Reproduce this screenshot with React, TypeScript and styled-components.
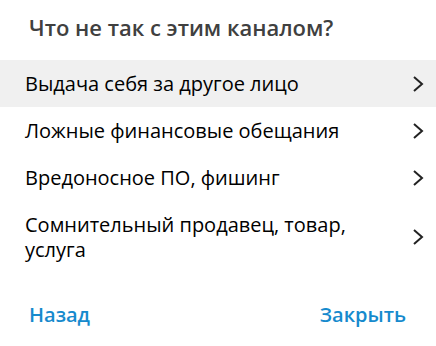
import React from "react";
import styled, { createGlobalStyle } from "styled-components";

const GlobalStyle = createGlobalStyle`
  html, body {
    margin: 0;
    padding: 0;
    background: #ffffff;
  }
  body {
    font-family: "Open Sans", "Noto Sans", sans-serif;
  }
`;

const Box = styled.div`
  width: 436px;
  height: 346px;
  background: #ffffff;
  display: flex;
  flex-direction: column;
`;

const Title = styled.h2`
  margin: 0;
  padding: 12px 29px 0;
  height: 60px;
  box-sizing: border-box;
  font-size: 22px;
  font-weight: 600;
  line-height: 30px;
  color: #404040;
`;

const List = styled.div`
  display: flex;
  flex-direction: column;
`;

const Row = styled.div<{ $active?: boolean }>`
  display: flex;
  align-items: center;
  justify-content: space-between;
  padding: 11px 11px 11px 25px;
  background: ${(p) => (p.$active ? "#f0f0f0" : "transparent")};
  cursor: pointer;
`;

const Label = styled.span`
  font-size: 20px;
  line-height: 25px;
  color: #000000;
  max-width: 340px;
`;

const Chevron = styled.svg`
  width: 14px;
  height: 18px;
  flex-shrink: 0;
`;

const Footer = styled.div`
  display: flex;
  justify-content: space-between;
  padding: 28px 30px 0 29px;
`;

const LinkButton = styled.button`
  border: none;
  background: none;
  padding: 0;
  font-family: inherit;
  font-size: 20px;
  font-weight: 600;
  line-height: 28px;
  color: #168acd;
  cursor: pointer;
`;

const reasons = [
  "Выдача себя за другое лицо",
  "Ложные финансовые обещания",
  "Вредоносное ПО, фишинг",
  "Сомнительный продавец, товар, услуга",
];

const App = () => {
  return (
    <>
      <GlobalStyle />
      <Box>
        <Title>Что не так с этим каналом?</Title>
        <List>
          {reasons.map((r, i) => (
            <Row key={r} $active={i === 0}>
              <Label>{r}</Label>
              <Chevron viewBox="0 0 14 18">
                <path
                  d="M3 2 L11 9 L3 16"
                  fill="none"
                  stroke="#222"
                  strokeWidth="2"
                />
              </Chevron>
            </Row>
          ))}
        </List>
        <Footer>
          <LinkButton>Назад</LinkButton>
          <LinkButton>Закрыть</LinkButton>
        </Footer>
      </Box>
    </>
  );
};

export default App;
